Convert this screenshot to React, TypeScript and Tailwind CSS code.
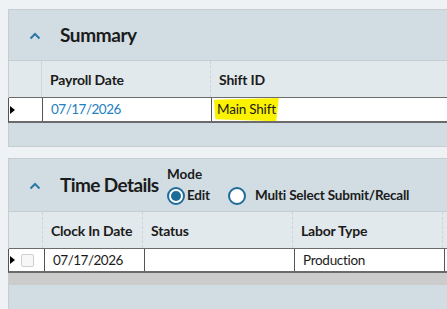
import React from "react";

const font = { fontFamily: "Lato, 'Noto Sans', sans-serif" };

function Chevron() {
  return (
    <svg width="12" height="8" viewBox="0 0 12 8" className="block">
      <polyline points="1.5,6.5 6,2 10.5,6.5" fill="none" stroke="#2a78a6" strokeWidth="2" />
    </svg>
  );
}

function RowMarker() {
  return <div className="w-0 h-0 border-y-[4px] border-y-transparent border-l-[5px] border-l-black" />;
}

function Radio({ checked }: { checked?: boolean }) {
  return (
    <div className="w-[18px] h-[18px] shrink-0 rounded-full border-2 border-[#1d6c98] bg-white flex items-center justify-center">
      {checked && <div className="w-[10px] h-[10px] rounded-full bg-[#1d6c98]" />}
    </div>
  );
}

export default function App() {
  return (
    <div
      className="w-[447px] h-[309px] overflow-hidden bg-[#eef2f5] pl-[8px] pt-[9px] text-[#1b1b1b]"
      style={font}
    >
      {/* Summary panel */}
      <div className="w-[460px] border border-[#c6ced2] bg-[#d1dde3]">
        <div className="h-[51px] flex items-center border-b border-[#c6ced2]">
          <div className="pl-[20px] pt-[1px]">
            <Chevron />
          </div>
          <div className="ml-[19px] text-[19px] font-bold tracking-[-0.4px]">Summary</div>
        </div>
        <div className="h-[37px] flex bg-[#e2e9ec] border-b border-[#6b6b6b] text-[14px] font-bold tracking-[-0.2px]">
          <div className="w-[33px] border-r border-[#cfd6d9]" />
          <div className="w-[169px] border-r border-dashed border-[#cdd4d7] flex items-center pl-[8px]">
            Payroll Date
          </div>
          <div className="flex-1 flex items-center pl-[8px]">Shift ID</div>
        </div>
        <div className="h-[25px] flex bg-white border-b-2 border-[#6b6b6b] text-[13.5px] -ml-px border-l border-l-[#555]">
          <div className="w-[34px] border-r border-[#555] flex items-center pl-[1px]">
            <RowMarker />
          </div>
          <div className="w-[169px] border-r border-[#555] flex items-center pl-[8px] text-[#2280bf] tracking-[-0.5px]">
            07/17/2026
          </div>
          <div className="flex-1 flex items-center pl-[2px]">
            <span className="bg-[#fbf200] px-[3px] pt-[1px] pb-[2px] tracking-[-0.2px] [clip-path:polygon(0_8%,100%_0,96%_100%,2%_92%)]">
              Main Shift
            </span>
          </div>
        </div>
        <div className="h-[23px]" />
      </div>

      {/* Time Details panel */}
      <div className="mt-[11px] w-[460px] border border-[#c6ced2] bg-[#d1dde3] h-[200px]">
        <div className="h-[53px] flex items-center border-b border-[#c6ced2]">
          <div className="pl-[20px] pt-[1px]">
            <Chevron />
          </div>
          <div className="ml-[19px] w-[107px] text-[19px] font-bold tracking-[-0.6px] whitespace-nowrap">
            Time Details
          </div>
          <div className="flex flex-col pt-[2px]">
            <div className="text-[13.5px] font-bold leading-[16px]">Mode</div>
            <div className="flex items-center mt-[3px] text-[13.5px] font-bold tracking-[-0.2px]">
              <Radio checked />
              <span className="ml-[2px] w-[41px]">Edit</span>
              <Radio />
              <span className="ml-[9px] whitespace-nowrap">Multi Select Submit/Recall</span>
            </div>
          </div>
        </div>
        <div className="h-[37px] flex bg-[#e2e9ec] border-b border-[#6b6b6b] text-[14px] font-bold tracking-[-0.2px]">
          <div className="w-[34px] border-r border-dashed border-[#cdd4d7]" />
          <div className="w-[100px] border-r border-dashed border-[#cdd4d7] flex items-center pl-[8px] whitespace-nowrap">
            Clock In Date
          </div>
          <div className="w-[150px] border-r border-dashed border-[#cdd4d7] flex items-center pl-[8px]">
            Status
          </div>
          <div className="w-[150px] border-r border-dashed border-[#cdd4d7] flex items-center pl-[8px]">
            Labor Type
          </div>
          <div className="flex-1" />
        </div>
        <div className="h-[24px] flex bg-white border-b-2 border-[#6b6b6b] text-[13.5px] -ml-px border-l border-l-[#555]">
          <div className="w-[36px] border-r border-[#555] flex items-center pl-[1px]">
            <RowMarker />
            <div className="ml-[6px] w-[13px] h-[13px] rounded-[2px] border border-[#cfcfcf] bg-[#f7f7f7]" />
          </div>
          <div className="w-[100px] border-r border-[#555] flex items-center pl-[8px] tracking-[-0.5px]">
            07/17/2026
          </div>
          <div className="w-[150px] border-r border-[#555]" />
          <div className="w-[150px] border-r border-[#555] flex items-center pl-[8px] tracking-[-0.3px]">
            Production
          </div>
          <div className="flex-1" />
        </div>
        <div className="h-[12px] bg-[#cccccc]" />
      </div>
    </div>
  );
}
